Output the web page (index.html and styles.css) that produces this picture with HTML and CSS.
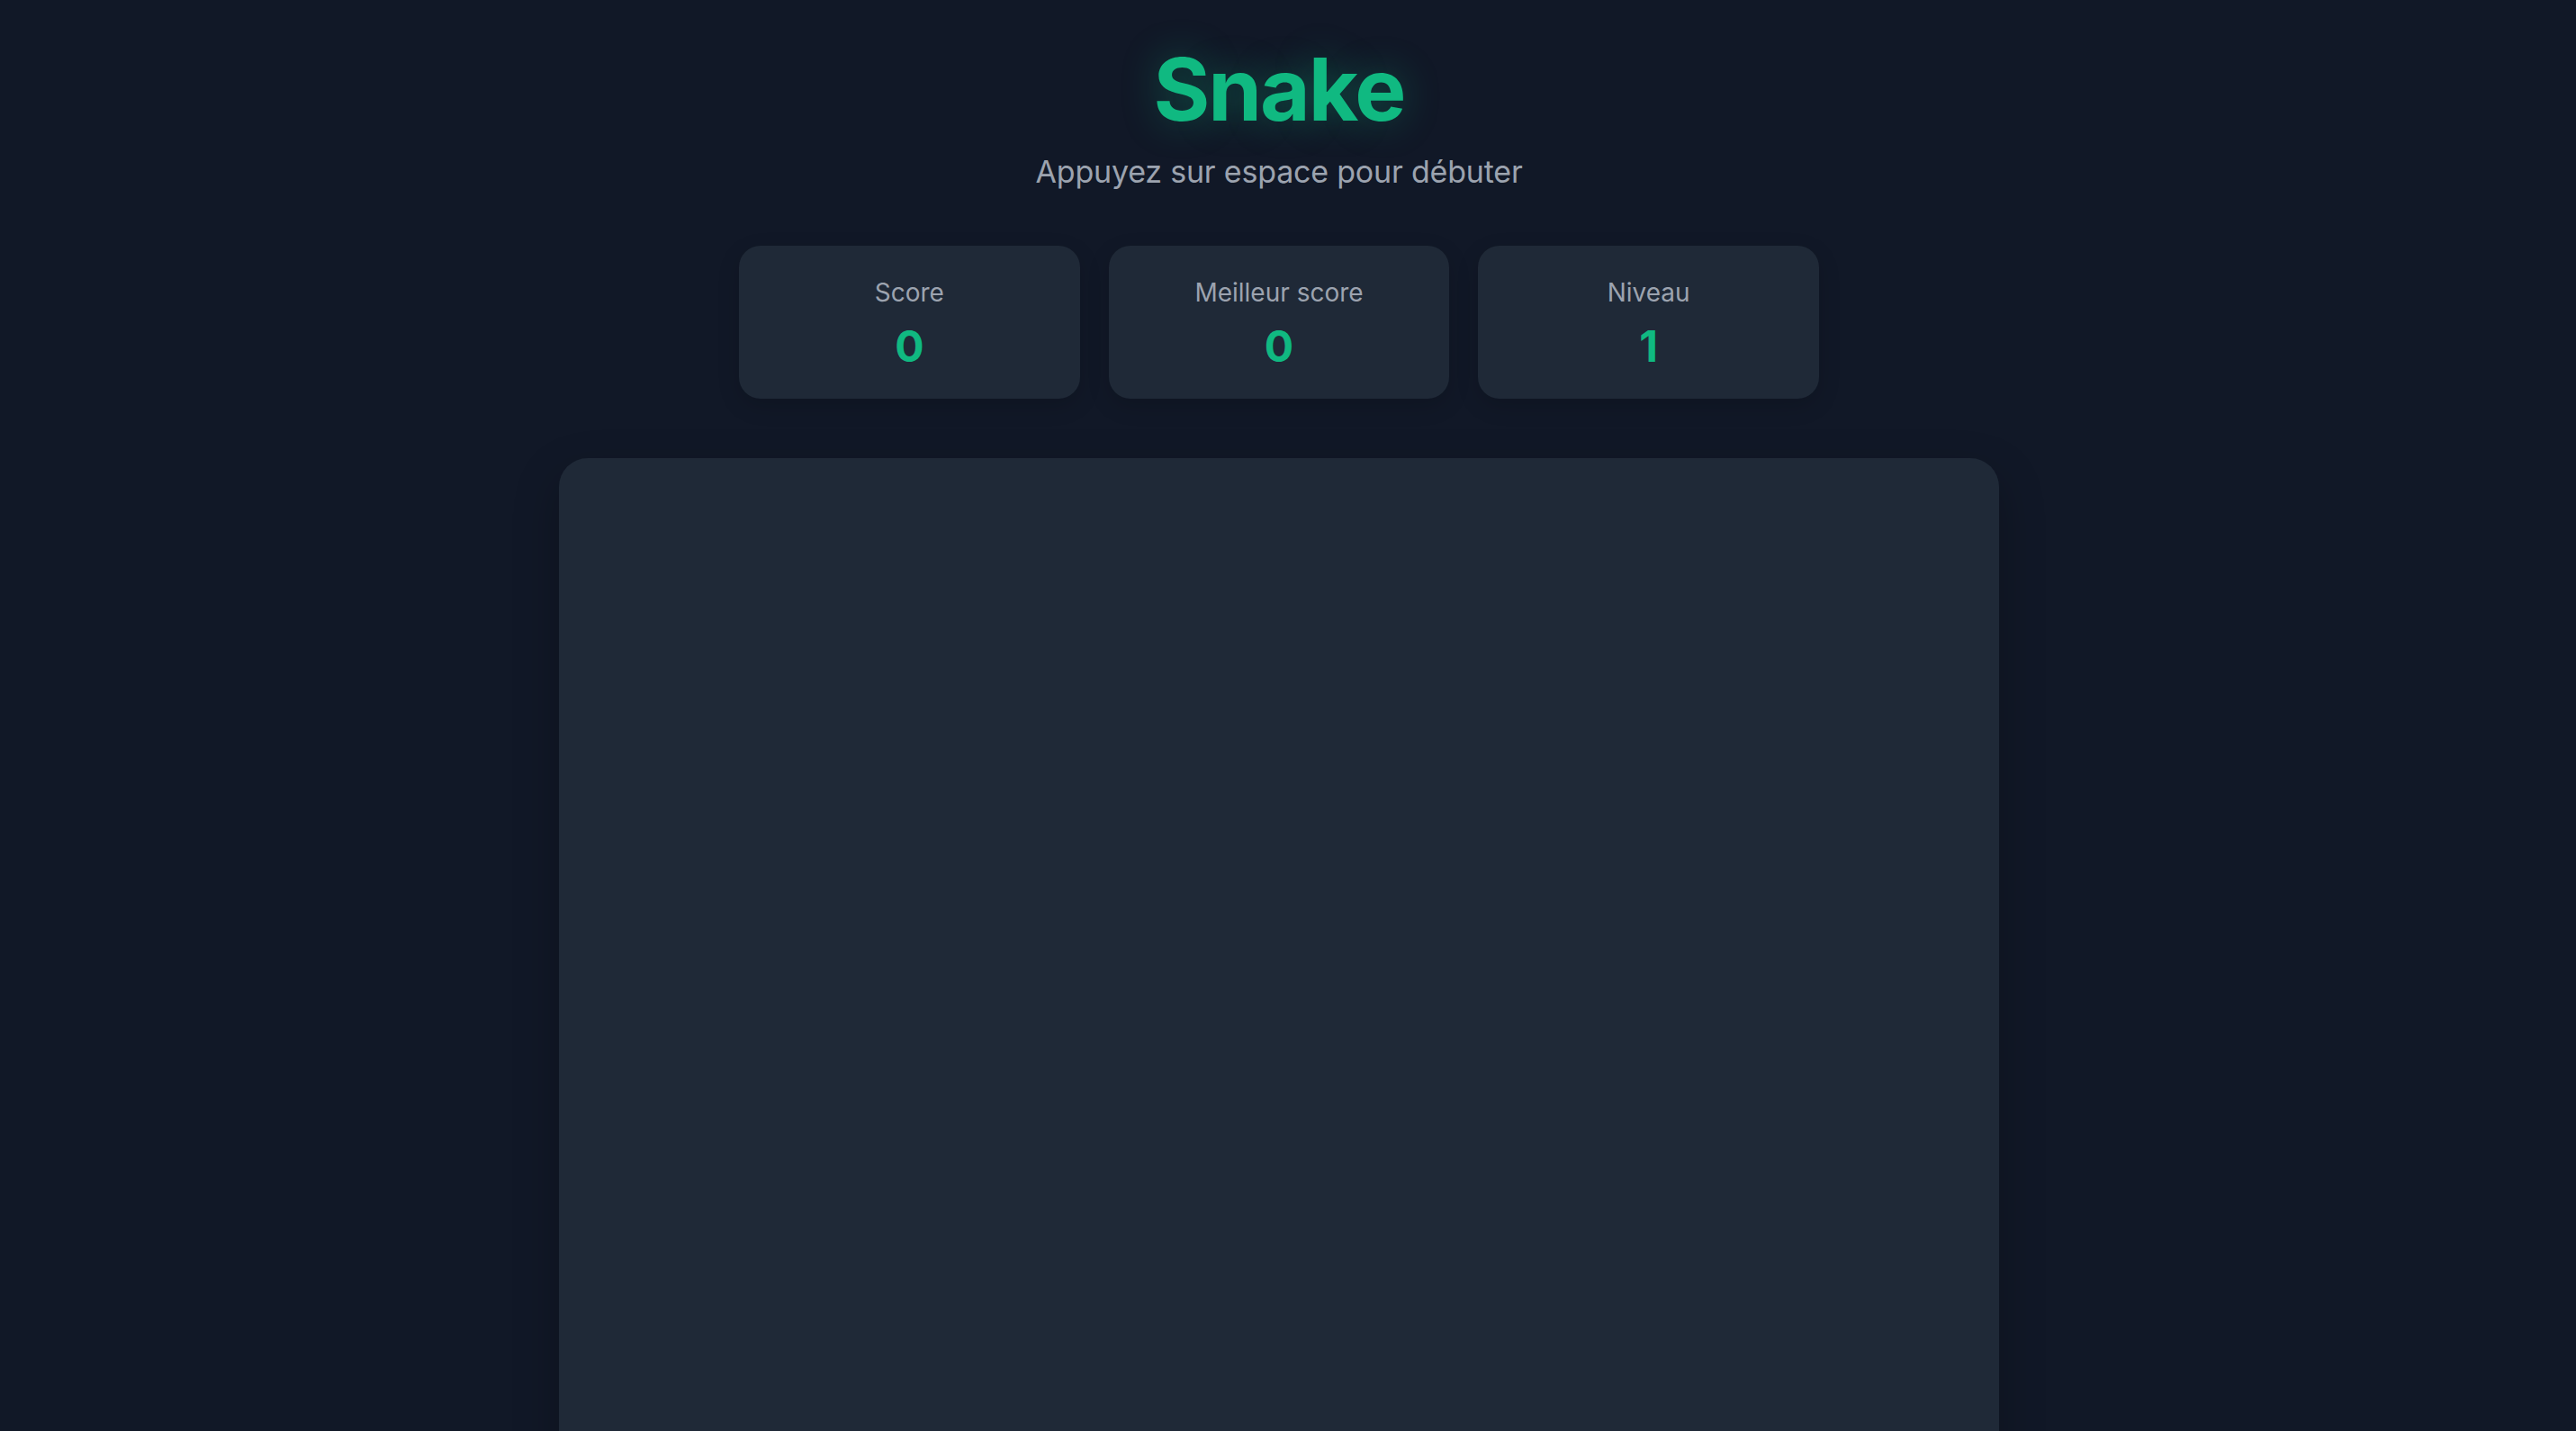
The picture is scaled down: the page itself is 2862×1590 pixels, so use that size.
FILE: index.html
```html
<!DOCTYPE html>
<html lang="fr">
<head>
<meta charset="utf-8">
<title>Snake</title>
<link rel="stylesheet" href="styles.css">
</head>
<body>
<main class="app">
  <header class="header">
    <h1 class="title">Snake</h1>
    <p class="subtitle">Appuyez sur espace pour débuter</p>
  </header>
  <section class="stats">
    <div class="stat">
      <div class="stat-label">Score</div>
      <div class="stat-value">0</div>
    </div>
    <div class="stat">
      <div class="stat-label">Meilleur score</div>
      <div class="stat-value">0</div>
    </div>
    <div class="stat">
      <div class="stat-label">Niveau</div>
      <div class="stat-value">1</div>
    </div>
  </section>
  <div class="board"></div>
</main>
</body>
</html>
```

FILE: styles.css
```css
html, body {
  margin: 0;
  padding: 0;
  background: #111827;
  overflow: hidden;
  height: 100%;
}

body {
  font-family: Inter, "Noto Sans", "Liberation Sans", sans-serif;
  color: #e5e7eb;
}

.app {
  display: flex;
  flex-direction: column;
  align-items: center;
  padding: 35px 20px 0 0;
}

.header {
  display: flex;
  flex-direction: column;
  align-items: center;
}

.title {
  margin: 0;
  font-size: 96px;
  line-height: 128px;
  font-weight: 700;
  letter-spacing: -2px;
  color: #10b981;
  text-shadow: 0 0 40px rgba(16, 185, 129, 0.35);
}

.subtitle {
  margin: 0;
  font-size: 34px;
  line-height: 56px;
  letter-spacing: -0.2px;
  color: #9ca3af;
}

.stats {
  display: grid;
  grid-template-columns: repeat(3, 1fr);
  gap: 32px;
  width: 1200px;
  margin-top: 54px;
}

.stat {
  background: #1f2937;
  border-radius: 24px;
  padding: 32px 24px 26px;
  display: flex;
  flex-direction: column;
  align-items: center;
  box-shadow: 0 8px 24px rgba(0, 0, 0, 0.15);
}

.stat-label {
  font-size: 28px;
  line-height: 40px;
  color: #9ca3af;
}

.stat-value {
  margin-top: 8px;
  font-size: 48px;
  line-height: 64px;
  font-weight: 700;
  color: #10b981;
}

.board {
  width: 1600px;
  height: 1200px;
  margin-top: 66px;
  background: #1f2937;
  border-radius: 32px;
  box-shadow: 0 20px 50px rgba(0, 0, 0, 0.25);
}
```
